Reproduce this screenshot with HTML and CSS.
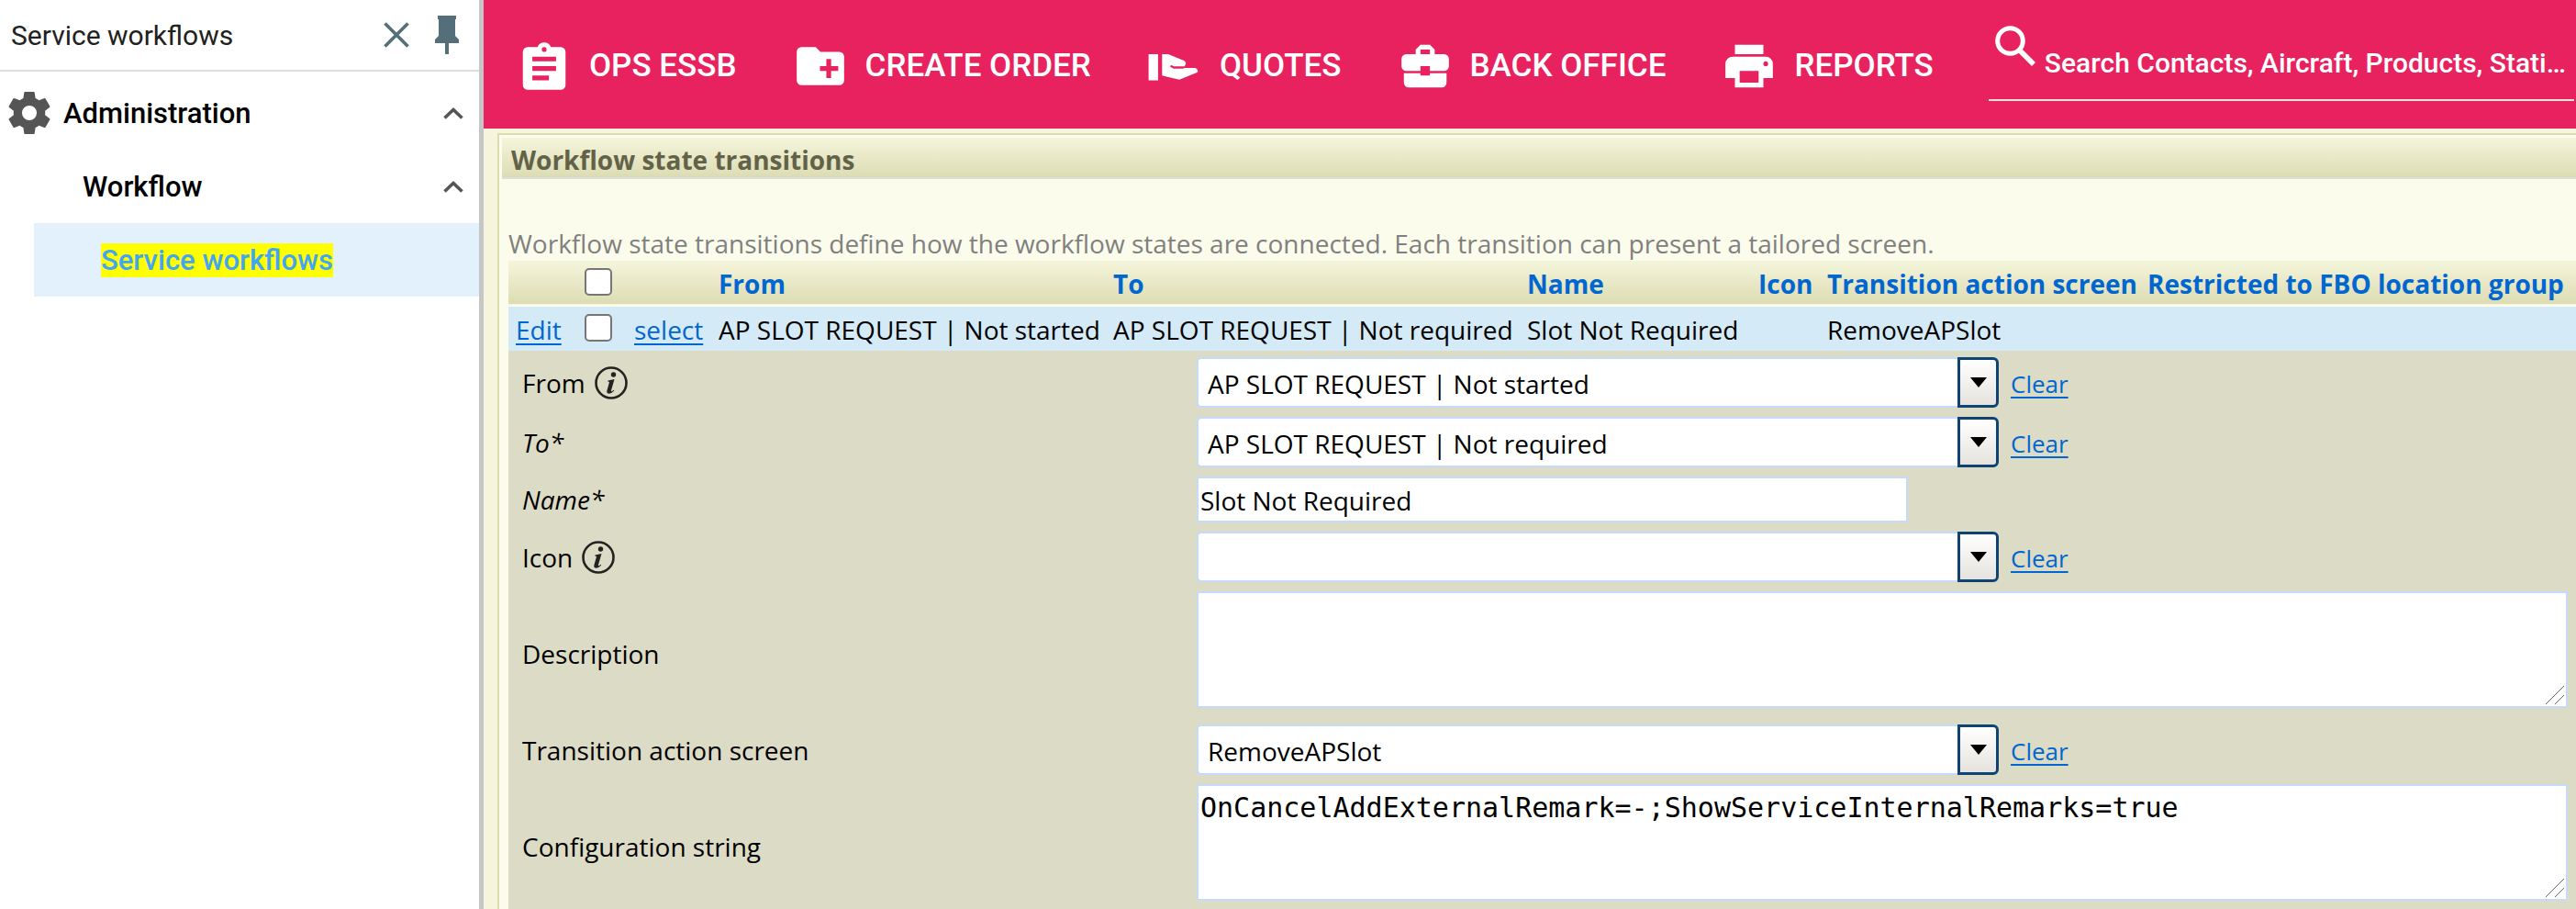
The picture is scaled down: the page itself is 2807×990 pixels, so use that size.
FILE: index.html
```html
<!DOCTYPE html>
<html lang="en">
<head>
<meta charset="utf-8">
<title>Service workflows</title>
<link rel="stylesheet" href="styles.css">
</head>
<body>
<div class="app">
  <aside class="sidebar">
    <header class="sidebar-head">
      <span class="sidebar-title">Service workflows</span>
      <button class="icon-button" type="button" aria-label="Clear filter">
        <svg class="icon-close" viewBox="0 0 28 28"><path d="M1.500 1.500l25 25M26.500 1.500l-25 25" fill="none" stroke="currentColor" stroke-width="3.600"/></svg>
      </button>
      <button class="icon-button" type="button" aria-label="Pin menu">
        <svg class="icon-pin" viewBox="0 0 26 42"><path d="M3 0h20v4h-1v18l4 4v4H15v12h-4V30H0v-4l4-4V4H3z" fill="currentColor"/></svg>
      </button>
    </header>
    <nav class="tree">
      <button class="tree-row" type="button">
        <svg class="icon-gear" viewBox="2 2 20 20"><path fill="currentColor" d="M12 15.500A3.500 3.500 0 0 1 8.500 12 3.500 3.500 0 0 1 12 8.500a3.500 3.500 0 0 1 3.500 3.500 3.500 3.500 0 0 1-3.500 3.500m7.430-2.530c.04-.32.07-.64.07-.97s-.03-.66-.07-1l2.110-1.630c.19-.15.24-.42.12-.64l-2-3.460c-.12-.22-.39-.31-.61-.22l-2.490 1c-.52-.39-1.060-.73-1.690-.98l-.37-2.650A.506.506 0 0 0 14 2h-4c-.25 0-.46.18-.5.42l-.37 2.650c-.63.25-1.170.59-1.690.98l-2.490-1c-.22-.09-.49 0-.61.22l-2 3.460c-.13.22-.07.49.12.64L4.570 11c-.04.34-.07.67-.07 1s.03.65.07.97l-2.110 1.660c-.19.15-.25.42-.12.64l2 3.460c.12.22.39.3.61.22l2.490-1.010c.52.4 1.060.74 1.690.99l.37 2.650c.04.24.25.42.5.42h4c.25 0 .46-.18.5-.42l.37-2.650c.63-.26 1.170-.59 1.690-.99l2.490 1.010c.22.08.49 0 .61-.22l2-3.460c.12-.22.07-.49-.12-.64z"/></svg>
        <span class="tree-label">Administration</span>
        <svg class="icon-chevron" viewBox="0 0 22 13"><path d="M1.500 11.500L11 2.500l9.500 9" fill="none" stroke="currentColor" stroke-width="3.600"/></svg>
      </button>
      <button class="tree-row tree-row-child" type="button">
        <span class="tree-label">Workflow</span>
        <svg class="icon-chevron" viewBox="0 0 22 13"><path d="M1.500 11.500L11 2.500l9.500 9" fill="none" stroke="currentColor" stroke-width="3.600"/></svg>
      </button>
      <a class="tree-link" href="#"><mark>Service workflows</mark></a>
    </nav>
  </aside>

  <div class="workspace">
    <header class="topbar">
      <a class="menu-item" href="#">
        <svg class="menu-icon" viewBox="0 0 24 24"><path fill-rule="evenodd" d="M19 4h-4.200a3 3 0 0 0-5.600 0H5a2 2 0 0 0-2 2v14a2 2 0 0 0 2 2h14a2 2 0 0 0 2-2V6a2 2 0 0 0-2-2zm-7 0a1 1 0 1 1 0 2 1 1 0 0 1 0-2zM7 8h10v2H7zm0 4h10v2H7zm0 4h7v2H7z" fill="currentColor"/></svg>
        <span>OPS ESSB</span>
      </a>
      <a class="menu-item" href="#">
        <svg class="menu-icon" viewBox="0 0 24 24"><path fill-rule="evenodd" d="M20 6h-8l-2-2H4a2 2 0 0 0-2 2v12a2 2 0 0 0 2 2h16a2 2 0 0 0 2-2V8a2 2 0 0 0-2-2zm-.5 8h-3v3h-2v-3h-2.700v-2h2.700V9h2v3h3z" fill="currentColor"/></svg>
        <span>CREATE ORDER</span>
      </a>
      <a class="menu-item" href="#">
        <svg class="menu-icon" viewBox="0 0 24 24"><path d="M1 7h4v11H1zM6.700 7h2.600l6.600 2.700q1 .6.700 1.500l-.4.900h-4.500l-1.300-.6-.3.800 1.500.8h3.900l.7-.3h4.500q1.500.8.900 1.800L14 17.700 6.700 16z" fill="currentColor"/></svg>
        <span>QUOTES</span>
      </a>
      <a class="menu-item" href="#">
        <svg class="menu-icon" viewBox="0 0 24 24"><path fill-rule="evenodd" d="M10 16v-1H3.010v4a2 2 0 0 0 2 2h14a2 2 0 0 0 2-2v-4H14v1zM20 7h-4V5l-2-2h-4L8 5v2H4a2 2 0 0 0-2 2v3a2 2 0 0 0 2 2h6v-2h4v2h6a2 2 0 0 0 2-2V9a2 2 0 0 0-2-2zm-6 0h-4V5h4z" fill="currentColor"/></svg>
        <span>BACK OFFICE</span>
      </a>
      <a class="menu-item" href="#">
        <svg class="menu-icon" viewBox="0 0 24 24"><path fill-rule="evenodd" d="M18 3H6v4h12zM19 8H5a3 3 0 0 0-3 3v6h4v4h12v-4h4v-6a3 3 0 0 0-3-3zm-3 11H8v-5h8zm3-7a1 1 0 1 1 0-2 1 1 0 0 1 0 2z" fill="currentColor"/></svg>
        <span>REPORTS</span>
      </a>
      <label class="search">
        <svg class="search-icon" viewBox="0 0 44 44"><circle cx="16.500" cy="16.500" r="13.800" fill="none" stroke="currentColor" stroke-width="5"/><path d="M27 27l15 15" stroke="currentColor" stroke-width="5.600"/></svg>
        <input class="search-input" type="text" aria-label="Search" placeholder="Search Contacts, Aircraft, Products, Stati…">
      </label>
    </header>

    <main class="page">
      <section class="panel">
        <h1 class="panel-title">Workflow state transitions</h1>
        <div class="panel-body">
          <p class="intro">Workflow state transitions define how the workflow states are connected. Each transition can present a tailored screen.</p>
          <table class="grid">
            <colgroup>
              <col class="col-edit"><col class="col-check"><col class="col-select"><col class="col-from"><col class="col-to"><col class="col-name"><col class="col-icon"><col class="col-screen"><col>
            </colgroup>
            <thead>
              <tr>
                <th></th>
                <th><input class="check" type="checkbox" aria-label="Select all"></th>
                <th></th>
                <th><a href="#">From</a></th>
                <th><a href="#">To</a></th>
                <th><a href="#">Name</a></th>
                <th><a href="#">Icon</a></th>
                <th><a href="#">Transition action screen</a></th>
                <th><a href="#">Restricted to FBO location group</a></th>
              </tr>
            </thead>
            <tbody>
              <tr>
                <td><a class="link" href="#">Edit</a></td>
                <td><input class="check" type="checkbox" aria-label="Select row"></td>
                <td><a class="link" href="#">select</a></td>
                <td>AP SLOT REQUEST | Not started</td>
                <td>AP SLOT REQUEST | Not required</td>
                <td>Slot Not Required</td>
                <td></td>
                <td>RemoveAPSlot</td>
                <td></td>
              </tr>
            </tbody>
          </table>

          <form class="form">
            <div class="field">
              <div class="field-label"><label for="from">From</label>
                <svg class="icon-info" viewBox="0 0 36 36"><circle cx="18" cy="18" r="16.500" fill="none" stroke="currentColor" stroke-width="2.600"/><circle cx="20.500" cy="9" r="2.700" fill="currentColor"/><path d="M14.500 15.500l7-1.500-3.600 12.500q-.4 1.800 2.700-.8l.6.700q-3.200 3.600-6.200 3.200-2.400-.5-1.500-3.600l2.400-8.200q.4-1.400-1.600-1.400z" fill="currentColor"/></svg>
              </div>
              <div class="field-control">
                <span class="combo"><select id="from"><option>AP SLOT REQUEST | Not started</option></select><span class="combo-arrow"></span></span>
                <a class="link clear" href="#">Clear</a>
              </div>
            </div>
            <div class="field">
              <div class="field-label required"><label for="to">To*</label></div>
              <div class="field-control">
                <span class="combo"><select id="to"><option>AP SLOT REQUEST | Not required</option></select><span class="combo-arrow"></span></span>
                <a class="link clear" href="#">Clear</a>
              </div>
            </div>
            <div class="field">
              <div class="field-label required"><label for="name">Name*</label></div>
              <div class="field-control"><input class="text-input" id="name" type="text" value="Slot Not Required"></div>
            </div>
            <div class="field">
              <div class="field-label"><label for="icon">Icon</label>
                <svg class="icon-info" viewBox="0 0 36 36"><circle cx="18" cy="18" r="16.500" fill="none" stroke="currentColor" stroke-width="2.600"/><circle cx="20.500" cy="9" r="2.700" fill="currentColor"/><path d="M14.500 15.500l7-1.500-3.600 12.500q-.4 1.800 2.700-.8l.6.700q-3.200 3.600-6.200 3.200-2.400-.5-1.500-3.600l2.400-8.200q.4-1.400-1.600-1.400z" fill="currentColor"/></svg>
              </div>
              <div class="field-control">
                <span class="combo"><select id="icon"><option></option></select><span class="combo-arrow"></span></span>
                <a class="link clear" href="#">Clear</a>
              </div>
            </div>
            <div class="field">
              <div class="field-label"><label for="description">Description</label></div>
              <div class="field-control">
                <div class="area"><textarea id="description"></textarea><svg class="grip" viewBox="0 0 20 20"><path d="M0 20L20 0M10 20L20 10" stroke="currentColor"/></svg></div>
              </div>
            </div>
            <div class="field">
              <div class="field-label"><label for="screen">Transition action screen</label></div>
              <div class="field-control">
                <span class="combo"><select id="screen"><option>RemoveAPSlot</option></select><span class="combo-arrow"></span></span>
                <a class="link clear" href="#">Clear</a>
              </div>
            </div>
            <div class="field">
              <div class="field-label"><label for="config">Configuration string</label></div>
              <div class="field-control">
                <div class="area"><textarea id="config" spellcheck="false">OnCancelAddExternalRemark=-;ShowServiceInternalRemarks=true</textarea><svg class="grip" viewBox="0 0 20 20"><path d="M0 20L20 0M10 20L20 10" stroke="currentColor"/></svg></div>
              </div>
            </div>
          </form>
        </div>
      </section>
    </main>
  </div>
</div>
</body>
</html>
```
FILE: styles.css
```css
* { box-sizing: border-box; }

body {
  margin: 0;
  font-family: "Open Sans", "Noto Sans", sans-serif;
  font-size: 28px;
  color: #000;
}

button {
  border: 0;
  padding: 0;
  background: none;
  font: inherit;
  color: inherit;
}

svg { display: block; flex: none; }

.app {
  display: flex;
  height: 100vh;
  overflow: hidden;
}

/* Sidebar */
.sidebar {
  flex: none;
  width: 527px;
  border-right: 5px solid #c6c6c6;
  background: #fff;
  font-family: Roboto, sans-serif;
  font-size: 30px;
}

.sidebar-head {
  display: flex;
  align-items: center;
  gap: 28px;
  height: 78px;
  padding: 0 22px 0 12px;
  border-bottom: 2px solid #ddd;
  color: #546e7a;
}

.sidebar-title { flex: 1; color: #212121; }
.icon-close { width: 28px; height: 28px; }
.icon-pin { width: 26px; height: 42px; }

.tree {
  display: flex;
  flex-direction: column;
  padding-top: 5px;
  font-size: 31px;
  font-weight: 500;
}

.tree-row {
  display: flex;
  align-items: center;
  gap: 14px;
  height: 80px;
  padding: 0 17px 0 9px;
  text-align: left;
}

.tree-row-child { padding-left: 90px; }
.tree-label { flex: 1; }
.icon-gear { width: 46px; height: 46px; color: #555; }
.icon-chevron { width: 22px; height: 13px; color: #555; }

.tree-link {
  display: flex;
  align-items: center;
  height: 80px;
  margin-left: 37px;
  padding-left: 73px;
  background: #e3f1fc;
  color: #42a5f5;
  text-decoration: none;
}

.tree-link mark { background: #ff0; color: inherit; }

/* Top bar */
.workspace {
  display: flex;
  flex: 1;
  flex-direction: column;
  min-width: 0;
}

.topbar {
  display: flex;
  flex: none;
  align-items: center;
  gap: 60px;
  height: 140px;
  padding: 0 2px 0 35px;
  background: #e8225f;
  color: #fff;
  font-family: Roboto, sans-serif;
  font-weight: 500;
}

.menu-item {
  display: flex;
  flex: none;
  align-items: center;
  gap: 18px;
  padding-top: 3px;
  color: inherit;
  font-size: 35px;
  text-decoration: none;
}

.menu-icon { width: 62px; height: 62px; }

.search {
  display: flex;
  flex: 1;
  gap: 10px;
  min-width: 0;
  height: 82px;
  margin-bottom: 2px;
  padding-left: 7px;
  border-bottom: 2px solid #e0e0e0;
}

.search-icon { width: 44px; height: 44px; }

.search-input {
  flex: 1;
  min-width: 0;
  height: 80px;
  padding: 0;
  border: 0;
  outline: 0;
  background: none;
  color: #fff;
  font: 500 30px Roboto, sans-serif;
  text-overflow: ellipsis;
}

.search-input::placeholder { color: #fff; opacity: 1; }

/* Page panel */
.page {
  display: flex;
  flex: 1;
  min-height: 0;
  padding: 5px 0 0 15px;
  background: #f5f5dc;
}

.panel {
  display: flex;
  flex: 1;
  flex-direction: column;
  min-width: 0;
  padding: 3px 0 0 3px;
  border: solid #dcdcb0;
  border-width: 2px 0 0 2px;
  background: #fcfcec;
}

.panel-title {
  flex: none;
  height: 45px;
  margin: 0;
  padding-left: 10px;
  border-bottom: 2px solid #ddd;
  background: linear-gradient(#f5f5dc, #dcdcb3);
  color: #626249;
  font-size: 28px;
  font-weight: 700;
  line-height: 48px;
}

.panel-body {
  display: flex;
  flex: 1;
  flex-direction: column;
  min-height: 0;
  padding: 51px 0 0 7px;
}

.intro { margin: 0; color: #808080; line-height: 38px; }

.link, .grid th a { color: #0066d0; }
.link { text-underline-offset: 4px; }

/* Transition list */
.grid {
  flex: none;
  width: 100%;
  border-collapse: collapse;
  table-layout: fixed;
}

.grid th, .grid td {
  height: 48px;
  padding: 2px 8px 0;
  line-height: 46px;
  text-align: left;
  white-space: nowrap;
}

.grid thead tr {
  border-bottom: 2px solid #fcfcec;
  background: linear-gradient(#f5f5dc, #dcdcb3);
}

.grid th { font-weight: 700; }
.grid th a { text-decoration: none; }
.grid tbody tr { background: #d4eaf7; }

.col-edit { width: 75px; }
.col-check { width: 54px; }
.col-select { width: 92px; }
.col-from { width: 430px; }
.col-to { width: 451px; }
.col-name { width: 252px; }
.col-icon { width: 75px; }
.col-screen { width: 349px; }

.check {
  appearance: none;
  display: block;
  width: 30px;
  height: 30px;
  margin: 0 0 4px;
  border: 2px solid #767676;
  border-radius: 5px;
  background: #fff;
}

/* Edit form */
.form {
  flex: 1;
  min-height: 0;
  padding-top: 2px;
  background: #dcdbc5;
}

.field {
  display: grid;
  grid-template-columns: 750px 1fr;
  align-items: center;
  padding: 5px 0;
}

.field-label {
  display: flex;
  align-items: center;
  gap: 10px;
  padding-left: 15px;
}

.required { font-style: italic; }
.icon-info { width: 36px; height: 36px; color: #222; }

.field-control {
  display: flex;
  align-items: center;
  gap: 13px;
  padding-right: 9px;
}

.combo { display: flex; width: 874px; height: 55px; }

.combo select {
  appearance: none;
  flex: 1;
  min-width: 0;
  padding: 2px 10px 0;
  border: 2px solid #c6dafb;
  border-right: 0;
  border-radius: 5px 0 0 5px;
  background: #fff;
  color: #000;
  font: inherit;
}

.combo-arrow {
  display: grid;
  place-items: center;
  width: 45px;
  border: 3px solid #0f4373;
  border-radius: 0 6px 6px 0;
  background: linear-gradient(#fff, #e6e3de);
}

.combo-arrow::before {
  content: "";
  border: solid transparent;
  border-width: 11px 9px 0;
  border-top-color: #000;
}

.clear { padding-top: 3px; font-size: 26px; }

.text-input {
  width: 775px;
  height: 50px;
  padding: 2px 2px 0;
  border: 2px solid #c6dafb;
  background: #fff;
  color: #000;
  font: inherit;
}

.area {
  position: relative;
  flex: 1;
  height: 127px;
  margin-bottom: 8px;
}

.area textarea {
  display: block;
  width: 100%;
  height: 100%;
  padding: 4px 2px;
  border: 2px solid #c6dafb;
  background: #fff;
  color: #000;
  font: 30px/40px "DejaVu Sans Mono", monospace;
  resize: none;
}

.grip {
  position: absolute;
  right: 4px;
  bottom: 4px;
  width: 20px;
  height: 20px;
  color: #666;
}
```
